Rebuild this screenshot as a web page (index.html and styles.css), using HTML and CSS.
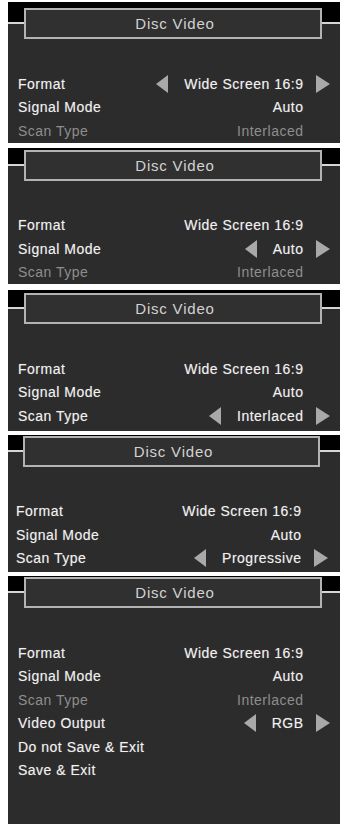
FILE: index.html
```html
<!DOCTYPE html>
<html lang="en">
<head>
    <meta charset="UTF-8">
    <meta name="viewport" content="width=device-width, initial-scale=1.0">
    <title>Disc Video</title>
    <link rel="stylesheet" href="styles.css">
</head>
<body>
    <div class="screens">

        <!-- format selected -->
        <div class="panel panel-1">
            <div class="title-box">Disc Video</div>
            <div class="rows">
                <div class="row">
                    <span class="label">Format</span>
                    <svg class="arrow arrow-left" viewBox="0 0 12 18"><path d="M12 0 L0 9 L12 18 Z"/></svg>
                    <span class="value">Wide Screen 16:9</span>
                    <span class="slot"><svg class="arrow" viewBox="0 0 14 18"><path d="M0 0 L14 9 L0 18 Z"/></svg></span>
                </div>
                <div class="row">
                    <span class="label">Signal Mode</span>
                    <span class="value">Auto</span>
                    <span class="slot"></span>
                </div>
                <div class="row dim">
                    <span class="label">Scan Type</span>
                    <span class="value">Interlaced</span>
                    <span class="slot"></span>
                </div>
            </div>
        </div>

        <!-- signal mode selected -->
        <div class="panel panel-2">
            <div class="title-box">Disc Video</div>
            <div class="rows">
                <div class="row">
                    <span class="label">Format</span>
                    <span class="value">Wide Screen 16:9</span>
                    <span class="slot"></span>
                </div>
                <div class="row">
                    <span class="label">Signal Mode</span>
                    <svg class="arrow arrow-left" viewBox="0 0 12 18"><path d="M12 0 L0 9 L12 18 Z"/></svg>
                    <span class="value">Auto</span>
                    <span class="slot"><svg class="arrow" viewBox="0 0 14 18"><path d="M0 0 L14 9 L0 18 Z"/></svg></span>
                </div>
                <div class="row dim">
                    <span class="label">Scan Type</span>
                    <span class="value">Interlaced</span>
                    <span class="slot"></span>
                </div>
            </div>
        </div>

        <!-- scan type: interlaced -->
        <div class="panel panel-3">
            <div class="title-box">Disc Video</div>
            <div class="rows">
                <div class="row">
                    <span class="label">Format</span>
                    <span class="value">Wide Screen 16:9</span>
                    <span class="slot"></span>
                </div>
                <div class="row">
                    <span class="label">Signal Mode</span>
                    <span class="value">Auto</span>
                    <span class="slot"></span>
                </div>
                <div class="row">
                    <span class="label">Scan Type</span>
                    <svg class="arrow arrow-left" viewBox="0 0 12 18"><path d="M12 0 L0 9 L12 18 Z"/></svg>
                    <span class="value">Interlaced</span>
                    <span class="slot"><svg class="arrow" viewBox="0 0 14 18"><path d="M0 0 L14 9 L0 18 Z"/></svg></span>
                </div>
            </div>
        </div>

        <!-- scan type: progressive -->
        <div class="panel panel-4">
            <div class="title-box">Disc Video</div>
            <div class="rows">
                <div class="row">
                    <span class="label">Format</span>
                    <span class="value">Wide Screen 16:9</span>
                    <span class="slot"></span>
                </div>
                <div class="row">
                    <span class="label">Signal Mode</span>
                    <span class="value">Auto</span>
                    <span class="slot"></span>
                </div>
                <div class="row">
                    <span class="label">Scan Type</span>
                    <svg class="arrow arrow-left" viewBox="0 0 12 18"><path d="M12 0 L0 9 L12 18 Z"/></svg>
                    <span class="value">Progressive</span>
                    <span class="slot"><svg class="arrow" viewBox="0 0 14 18"><path d="M0 0 L14 9 L0 18 Z"/></svg></span>
                </div>
            </div>
        </div>

        <!-- video output -->
        <div class="panel panel-5">
            <div class="title-box">Disc Video</div>
            <div class="rows">
                <div class="row">
                    <span class="label">Format</span>
                    <span class="value">Wide Screen 16:9</span>
                    <span class="slot"></span>
                </div>
                <div class="row">
                    <span class="label">Signal Mode</span>
                    <span class="value">Auto</span>
                    <span class="slot"></span>
                </div>
                <div class="row dim">
                    <span class="label">Scan Type</span>
                    <span class="value">Interlaced</span>
                    <span class="slot"></span>
                </div>
                <div class="row">
                    <span class="label">Video Output</span>
                    <svg class="arrow arrow-left" viewBox="0 0 12 18"><path d="M12 0 L0 9 L12 18 Z"/></svg>
                    <span class="value">RGB</span>
                    <span class="slot"><svg class="arrow" viewBox="0 0 14 18"><path d="M0 0 L14 9 L0 18 Z"/></svg></span>
                </div>
                <div class="row">
                    <span class="label">Do not Save &amp; Exit</span>
                </div>
                <div class="row">
                    <span class="label">Save &amp; Exit</span>
                </div>
            </div>
        </div>

    </div>
</body>
</html>
```

FILE: styles.css
```css
body {
    margin: 2px 0 0 8px;
    background-color: #ffffff;
    font-family: 'Liberation Sans', Arial, sans-serif;
}

.screens {
    display: flex;
    flex-direction: column;
    width: 332px;
}

/* black band on top, thin light line, grey body */
.panel {
    --top: 6px;
    background: linear-gradient(to bottom,
        #000 0, #000 calc(var(--top) + 14px),
        #d6d6d6 calc(var(--top) + 14px), #d6d6d6 calc(var(--top) + 16px),
        #2c2c2c calc(var(--top) + 16px));
    padding-top: var(--top);
}

.panel-1 { --top: 6px; }
.panel-2 { --top: 2px; margin-top: 5px; }
.panel-3 { --top: 3px; margin-top: 6px; padding-bottom: 3px; }
.panel-4 { --top: 1px; margin-top: 4px; padding-bottom: 2px; }
.panel-5 { --top: 1px; margin-top: 4px; padding-bottom: 42px; }

.title-box {
    margin: 0 18px 0 16px;
    height: 31px;
    box-sizing: border-box;
    border: 2px solid #b3b3b3;
    background-color: #303030;
    color: #d2d2d2;
    font-size: 15px;
    letter-spacing: 0.8px;
    display: flex;
    align-items: center;
    justify-content: center;
    padding-left: 4px;
}

.rows {
    padding: 33px 10px 0 10px;
}

.panel-4 .title-box { margin-left: 15px; margin-right: 20px; }
.panel-4 .rows { padding-left: 8px; padding-right: 12px; }

.row {
    display: flex;
    align-items: center;
    height: 23.5px;
    font-size: 14px;
    letter-spacing: 0.5px;
    color: #f0f0f0;
    text-shadow: 0 0 1px rgba(255, 255, 255, 0.35);
}

.row.dim {
    color: #8e8e8e;
    text-shadow: none;
}

.label {
    flex: 1;
    white-space: nowrap;
}

.value {
    white-space: nowrap;
    margin-right: -0.5px;
}

.slot {
    width: 27px;
    display: flex;
    justify-content: flex-end;
}

.arrow {
    width: 14px;
    height: 18px;
    fill: #a9a9a9;
}

.arrow-left {
    width: 12px;
    margin-right: 16px;
}
```
